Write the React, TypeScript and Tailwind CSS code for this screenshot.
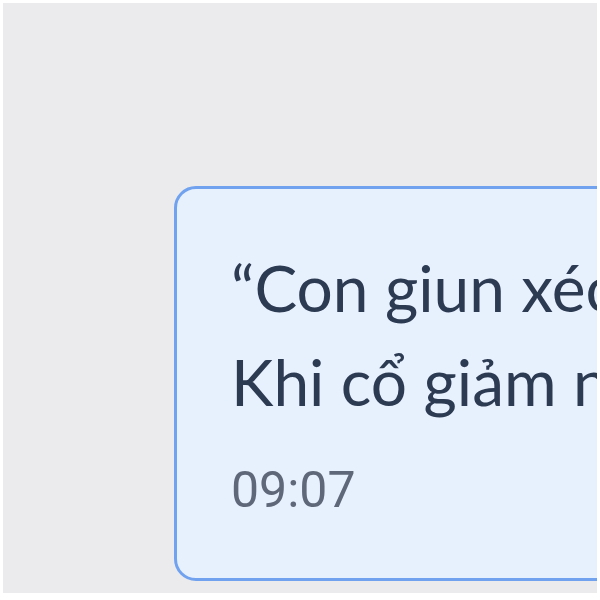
export default function App() {
  return (
    <div className="w-[600px] h-[600px] bg-white p-[3px]">
      <div className="w-full h-[590px] bg-[#ebebed] overflow-hidden pt-[183px] pl-[171px]">
        <div className="w-[520px] h-[395px] rounded-[22px] border-[3px] border-[#70a2ef] bg-[#e7f0fd] pl-[54px] pt-[52px]">
          <p
            className="text-[64px] leading-[94px] text-[#2c3a52] whitespace-nowrap"
            style={{ fontFamily: "Lato, 'Noto Sans', sans-serif" }}
          >
            “Con giun xéo lắm cũng quằn
            <br />
            Khi cổ giảm nhiệt thì ta mới vui”
          </p>
          <p
            className="mt-[31px] text-[50px] leading-[60px] text-[#5f6878]"
            style={{ fontFamily: "Roboto, 'Liberation Sans', sans-serif" }}
          >
            09:07
          </p>
        </div>
      </div>
    </div>
  );
}
